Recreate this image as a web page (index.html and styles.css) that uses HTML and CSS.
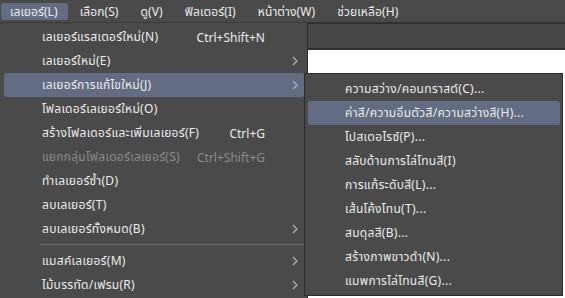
FILE: index.html
```html
<!DOCTYPE html>
<html lang="th">
<head>
<meta charset="utf-8">
<title>เมนูเลเยอร์</title>
<link rel="stylesheet" href="styles.css">
</head>
<body>
<div class="app">
  <nav class="menubar">
    <span class="mb-item active">เลเยอร์(L)</span>
    <span class="mb-item">เลือก(S)</span>
    <span class="mb-item">ดู(V)</span>
    <span class="mb-item">ฟิลเตอร์(I)</span>
    <span class="mb-item">หน้าต่าง(W)</span>
    <span class="mb-item">ช่วยเหลือ(H)</span>
  </nav>
  <div class="toolbar"></div>
  <div class="canvas"></div>

  <div class="dropdown">
    <div class="row"><span class="label">เลเยอร์แรสเตอร์ใหม่(N)</span><span class="shortcut">Ctrl+Shift+N</span></div>
    <div class="row"><span class="label">เลเยอร์ใหม่(E)</span><svg class="chev" viewBox="0 0 6 10"><path d="M1 1l4 4-4 4"/></svg></div>
    <div class="row hl"><span class="label">เลเยอร์การแก้ไขใหม่(J)</span><svg class="chev" viewBox="0 0 6 10"><path d="M1 1l4 4-4 4"/></svg></div>
    <div class="row"><span class="label">โฟลเดอร์เลเยอร์ใหม่(O)</span></div>
    <div class="row"><span class="label">สร้างโฟลเดอร์และเพิ่มเลเยอร์(F)</span><span class="shortcut">Ctrl+G</span></div>
    <div class="row disabled"><span class="label">แยกกลุ่มโฟลเดอร์เลเยอร์(S)</span><span class="shortcut">Ctrl+Shift+G</span></div>
    <div class="row"><span class="label">ทำเลเยอร์ซ้ำ(D)</span></div>
    <div class="row"><span class="label">ลบเลเยอร์(T)</span></div>
    <div class="row"><span class="label">ลบเลเยอร์ทั้งหมด(B)</span><svg class="chev" viewBox="0 0 6 10"><path d="M1 1l4 4-4 4"/></svg></div>
    <div class="sep"></div>
    <div class="row"><span class="label">แมสค์เลเยอร์(M)</span><svg class="chev" viewBox="0 0 6 10"><path d="M1 1l4 4-4 4"/></svg></div>
    <div class="row"><span class="label">ไม้บรรทัด/เฟรม(R)</span><svg class="chev" viewBox="0 0 6 10"><path d="M1 1l4 4-4 4"/></svg></div>
  </div>

  <div class="submenu">
    <div class="row"><span class="label">ความสว่าง/คอนทราสต์(C)...</span></div>
    <div class="row hl"><span class="label">ค่าสี/ความอิ่มตัวสี/ความสว่างสี(H)...</span></div>
    <div class="row"><span class="label">โปสเตอไรซ์(P)...</span></div>
    <div class="row"><span class="label">สลับด้านการไล่โทนสี(I)</span></div>
    <div class="row"><span class="label">การแก้ระดับสี(L)...</span></div>
    <div class="row"><span class="label">เส้นโค้งโทน(T)...</span></div>
    <div class="row"><span class="label">สมดุลสี(B)...</span></div>
    <div class="row"><span class="label">สร้างภาพขาวดำ(N)...</span></div>
    <div class="row"><span class="label">แมพการไล่โทนสี(G)...</span></div>
  </div>
</div>
</body>
</html>
```
FILE: styles.css
```css
* { box-sizing: border-box; }
html, body { margin: 0; padding: 0; }
body {
  width: 565px;
  height: 298px;
  overflow: hidden;
  background: #ffffff;
  font-family: "Noto Sans", "Noto Sans Thai", "Noto Sans Thai UI", "Leelawadee UI", Tahoma, sans-serif;
  font-size: 12px;
  color: #ececec;
}
.app {
  position: relative;
  width: 565px;
  height: 298px;
  display: flex;
  flex-direction: column;
}
.menubar {
  height: 22px;
  background: #4a4a4a;
  display: flex;
  align-items: center;
  gap: 3px;
  padding-left: 1px;
}
.mb-item {
  height: 17px;
  line-height: 17px;
  padding: 0 10px 0 9px;
  border-radius: 2px;
  white-space: nowrap;
  letter-spacing: 0.1px;
}
.mb-item.active { background: #636c82; }
.toolbar {
  height: 28px;
  background: #474747;
  border-top: 2px solid #2f2f2f;
  border-bottom: 2px solid #2f2f2f;
}
.canvas { flex: 1; background: #ffffff; }

.dropdown {
  position: absolute;
  left: 0;
  top: 22px;
  width: 308px;
  bottom: 0;
  background: #4a4a4a;
  border-right: 1px solid #2c2c2c;
  border-top: 1px solid #3a3a3a;
  padding: 2px 3px 0 4px;
}
.row {
  height: 24px;
  display: flex;
  align-items: center;
  position: relative;
  border-radius: 2px;
  white-space: nowrap;
}
.label { letter-spacing: 0.3px; }
.dropdown .row { padding-left: 38px; }
.row.hl { background: #636c82; }
.row.disabled { color: #8c8c8c; }
.shortcut {
  position: absolute;
  right: 39px;
  letter-spacing: 0;
}
.chev {
  position: absolute;
  right: 6px;
  top: 7px;
  width: 6px;
  height: 10px;
  fill: none;
  stroke: #b4b4b4;
  stroke-width: 1.2;
}
.sep {
  height: 1px;
  background: #6a6a6a;
  margin: 3px 0 4px 36px;
}
.submenu {
  position: absolute;
  left: 304px;
  top: 73px;
  width: 259px;
  height: 223px;
  background: #4a4a4a;
  border: 1px solid #2c2c2c;
  padding: 3px 2px 0 3px;
}
.submenu .row { padding-left: 37px; }
```
